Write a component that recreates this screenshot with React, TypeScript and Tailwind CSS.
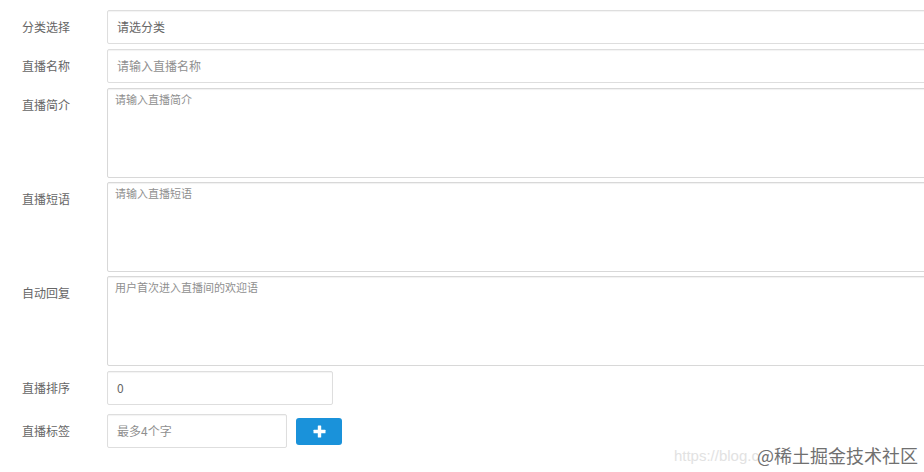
import React from "react";

const font = { fontFamily: '"Noto Sans CJK SC", "Microsoft YaHei", sans-serif' };

function Label({ children }: { children: React.ReactNode }) {
  return (
    <div className="w-[107px] shrink-0 pl-[22px] h-[34px] flex items-center text-[12px] text-[#666]">
      {children}
    </div>
  );
}

function InputBox({ text, w, h = "h-[34px]", color = "text-[#666]" }: { text: string; w: string; h?: string; color?: string }) {
  return (
    <div
      className={`${w} ${h} shrink-0 border border-[#dedede] rounded-[2px] bg-white shadow-[inset_0_1px_1px_rgba(0,0,0,0.05)] flex items-center pl-[9px] text-[12px] ${color}`}
    >
      {text}
    </div>
  );
}

function Area({ text }: { text: string }) {
  return (
    <div className="w-[840px] h-[90px] shrink-0 border border-[#d8d8d8] rounded-[2px] bg-white shadow-[inset_0_1px_1px_rgba(0,0,0,0.06)] pl-[7px] pt-[2px] text-[11px] text-[#8f8f8f]">
      {text}
    </div>
  );
}

export default function App() {
  return (
    <div className="relative w-[924px] h-[472px] overflow-hidden bg-white" style={font}>
      <div className="flex flex-col pt-[10px]">
        <div className="flex">
          <Label>分类选择</Label>
          <InputBox text="请选分类" w="w-[840px]" color="text-[#666]" />
        </div>
        <div className="flex mt-[5px]">
          <Label>直播名称</Label>
          <InputBox text="请输入直播名称" w="w-[840px]" color="text-[#8f8f8f]" />
        </div>
        <div className="flex mt-[5px]">
          <Label>直播简介</Label>
          <Area text="请输入直播简介" />
        </div>
        <div className="flex mt-[4px]">
          <Label>直播短语</Label>
          <Area text="请输入直播短语" />
        </div>
        <div className="flex mt-[4px]">
          <Label>自动回复</Label>
          <Area text="用户首次进入直播间的欢迎语" />
        </div>
        <div className="flex mt-[5px]">
          <Label>直播排序</Label>
          <InputBox text="0" w="w-[226px]" color="text-[#666]" />
        </div>
        <div className="flex items-center mt-[9px]">
          <Label>直播标签</Label>
          <InputBox text="最多4个字" w="w-[180px]" color="text-[#8f8f8f]" />
          <button className="ml-[9px] w-[46px] h-[27px] rounded-[3px] bg-[#1a92da] flex items-center justify-center">
            <svg width="13" height="13" viewBox="0 0 13 13">
              <rect x="4.8" y="0.5" width="3.4" height="12" fill="#fff" rx="0.5" />
              <rect x="0.5" y="4.8" width="12" height="3.4" fill="#fff" rx="0.5" />
            </svg>
          </button>
        </div>
      </div>
      <div className="absolute right-[6px] bottom-[5px] flex items-end">
        <span className="text-[15px] text-[#e2e2e2] mr-[-2px]" style={{ fontFamily: '"Liberation Sans", Arial, sans-serif' }}>
          https://blog.c
        </span>
        <span className="text-[18px] leading-[24px] text-[#707070]">@稀土掘金技术社区</span>
      </div>
    </div>
  );
}
